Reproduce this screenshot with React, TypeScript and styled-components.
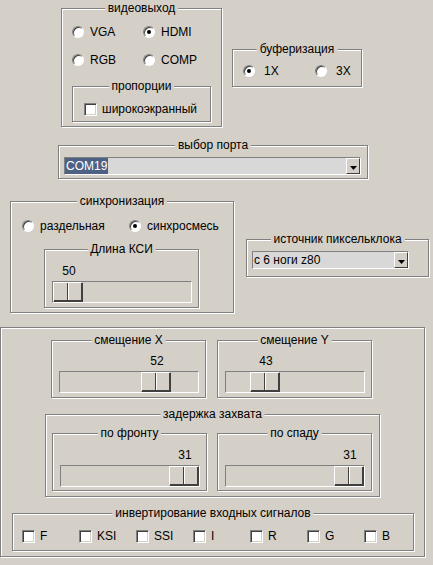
import React from 'react';
import styled, { createGlobalStyle } from 'styled-components';

const GlobalStyle = createGlobalStyle`
  html, body {
    margin: 0;
    padding: 0;
    background: #d4d0c8;
  }
  body {
    font-family: "Liberation Sans", Arial, sans-serif;
    font-size: 12px;
    color: #000;
  }
`;

const Page = styled.div`
  width: 433px;
  height: 565px;
  background: #d4d0c8;
  overflow: hidden;
  display: flex;
  flex-direction: column;
  align-items: flex-start;
`;

const Row = styled.div<{ $mt?: number; $ml?: number; $gap?: number }>`
  display: flex;
  align-items: flex-start;
  margin-top: ${(p) => p.$mt ?? 0}px;
  margin-left: ${(p) => p.$ml ?? 0}px;
  gap: ${(p) => p.$gap ?? 0}px;
`;

// etched border box, like a swing TitledBorder
const Group = styled.div<{
  $w: number;
  $h: number;
  $pt?: number;
  $pl?: number;
  $mt?: number;
  $ml?: number;
}>`
  position: relative;
  box-sizing: border-box;
  flex-shrink: 0;
  width: ${(p) => p.$w}px;
  height: ${(p) => p.$h}px;
  margin-top: ${(p) => p.$mt ?? 0}px;
  margin-left: ${(p) => p.$ml ?? 0}px;
  padding: ${(p) => p.$pt ?? 0}px 0 0 ${(p) => p.$pl ?? 0}px;
  border: 1px solid #808080;
  box-shadow: inset 1px 1px 0 #fff, 1px 1px 0 #fff;
`;

const Title = styled.span`
  position: absolute;
  top: -8px;
  left: 50%;
  transform: translateX(-50%);
  padding: 0 3px;
  background: #d4d0c8;
  line-height: 14px;
  white-space: nowrap;
`;

const RadioGrid = styled.div<{ $col: number; $rowGap?: number }>`
  display: grid;
  grid-template-columns: repeat(2, ${(p) => p.$col}px);
  row-gap: ${(p) => p.$rowGap ?? 0}px;
`;

const Option = styled.label<{ $gap?: number }>`
  display: flex;
  align-items: center;
  gap: ${(p) => p.$gap ?? 6}px;
  height: 14px;
  line-height: 14px;
  white-space: nowrap;
`;

const RadioMark = styled.span<{ $checked?: boolean }>`
  position: relative;
  flex-shrink: 0;
  box-sizing: border-box;
  width: 12px;
  height: 12px;
  border-radius: 50%;
  background: #fff;
  border: 1px solid;
  border-color: #808080 #fff #fff #808080;
  box-shadow: inset 1px 1px 0 #404040;

  &::after {
    content: '';
    display: ${(p) => (p.$checked ? 'block' : 'none')};
    position: absolute;
    left: 3px;
    top: 3px;
    width: 4px;
    height: 4px;
    border-radius: 50%;
    background: #000;
  }
`;

const CheckMark = styled.span`
  flex-shrink: 0;
  box-sizing: border-box;
  width: 13px;
  height: 13px;
  background: #fff;
  border: 1px solid;
  border-color: #808080 #fff #fff #808080;
  box-shadow: inset 1px 1px 0 #404040, inset -1px -1px 0 #d4d0c8;
`;

const CheckRow = styled.div`
  display: grid;
  grid-template-columns: repeat(7, 57px);
`;

const Combo = styled.div<{ $w: number }>`
  box-sizing: border-box;
  width: ${(p) => p.$w}px;
  height: 18px;
  display: flex;
  align-items: center;
  background: #d8d8d8;
  border: 1px solid;
  border-color: #808080 #fff #fff #808080;
`;

const ComboText = styled.span<{ $selected?: boolean }>`
  height: 16px;
  line-height: 16px;
  padding: 0 1px;
  background: ${(p) => (p.$selected ? '#4d6185' : 'transparent')};
  color: ${(p) => (p.$selected ? '#fff' : '#000')};
`;

const ComboArrow = styled.span`
  margin-left: auto;
  box-sizing: border-box;
  width: 14px;
  height: 16px;
  display: flex;
  align-items: flex-end;
  justify-content: center;
  padding-bottom: 3px;
  background: #d4d0c8;
  border: 1px solid;
  border-color: #fff #404040 #404040 #fff;
`;

const SliderValue = styled.div`
  height: 14px;
  line-height: 14px;
`;

const ValueText = styled.span`
  display: inline-block;
  width: 30px;
  text-align: center;
`;

const Track = styled.div`
  box-sizing: border-box;
  display: flex;
  width: 140px;
  height: 22px;
  margin-top: 3px;
  border: 1px solid;
  border-color: #808080 #fff #fff #808080;
`;

const Thumb = styled.div`
  position: relative;
  box-sizing: border-box;
  width: 30px;
  height: 20px;
  background: #d4d0c8;
  border-left: 1px solid #fff;
  border-top: 1px solid #fff;
  border-right: 1px solid #404040;
  border-bottom: 1px solid #404040;
  box-shadow: inset -1px -1px 0 #404040;

  &::after {
    content: '';
    position: absolute;
    left: 13px;
    top: 0;
    bottom: 1px;
    width: 1px;
    background: #404040;
    box-shadow: 1px 0 0 #fff;
  }
`;

const Radio = ({ label, checked, gap }: { label: string; checked?: boolean; gap?: number }) => (
  <Option $gap={gap}>
    <RadioMark $checked={checked} />
    {label}
  </Option>
);

const Check = ({ label }: { label: string }) => (
  <Option $gap={5}>
    <CheckMark />
    {label}
  </Option>
);

const Arrow = () => (
  <svg width="7" height="4" viewBox="0 0 7 4">
    <polygon points="0,0 7,0 3.5,4" fill="#000" />
  </svg>
);

interface SliderProps {
  value: number;
  min: number;
  max: number;
}

const Slider = ({ value, min, max }: SliderProps) => {
  const pos = Math.round(((value - min) / (max - min)) * 108);
  return (
    <>
      <SliderValue>
        <ValueText style={{ marginLeft: pos + 2 }}>{value}</ValueText>
      </SliderValue>
      <Track>
        <Thumb style={{ marginLeft: pos }} />
      </Track>
    </>
  );
};

const SliderGroup = ({ title, pt, ...rest }: SliderProps & { title: string; pt: number }) => (
  <Group $w={155} $h={58} $pt={pt} $pl={7}>
    <Title>{title}</Title>
    <Slider {...rest} />
  </Group>
);

export default function App() {
  return (
    <>
      <GlobalStyle />
      <Page>
        <Row $mt={8} $ml={61} $gap={10}>
          <Group $w={161} $h={119} $pt={16} $pl={10}>
            <Title>видеовыход</Title>
            <RadioGrid $col={71} $rowGap={14}>
              <Radio label="VGA" />
              <Radio label="HDMI" checked />
              <Radio label="RGB" />
              <Radio label="COMP" />
            </RadioGrid>
            <Group $w={139} $h={36} $mt={19} $pt={15} $pl={11}>
              <Title>пропорции</Title>
              <Check label="широкоэкранный" />
            </Group>
          </Group>
          <Group $w={130} $h={38} $mt={41} $pt={14} $pl={10}>
            <Title>буферизация</Title>
            <RadioGrid $col={72}>
              <Radio label="1X" checked gap={9} />
              <Radio label="3X" gap={9} />
            </RadioGrid>
          </Group>
        </Row>

        <Group $w={310} $h={34} $mt={18} $ml={58} $pt={11} $pl={5}>
          <Title>выбор порта</Title>
          <Combo $w={297}>
            <ComboText $selected>COM19</ComboText>
            <ComboArrow>
              <Arrow />
            </ComboArrow>
          </Combo>
        </Group>

        <Row $mt={22} $ml={10} $gap={12}>
          <Group $w={224} $h={112} $pt={17} $pl={11}>
            <Title>синхронизация</Title>
            <RadioGrid $col={107}>
              <Radio label="раздельная" />
              <Radio label="синхросмесь" checked />
            </RadioGrid>
            <Group $w={155} $h={59} $mt={16} $ml={22} $pt={14} $pl={7}>
              <Title>Длина КСИ</Title>
              <Slider value={50} min={50} max={100} />
            </Group>
          </Group>
          <Group $w={183} $h={38} $mt={38} $pt={11} $pl={5}>
            <Title>источник пиксельклока</Title>
            <Combo $w={157}>
              <ComboText>с 6 ноги z80</ComboText>
              <ComboArrow>
                <Arrow />
              </ComboArrow>
            </Combo>
          </Group>
        </Row>

        <Group $w={425} $h={230} $mt={14}>
          <Row $mt={12} $ml={50} $gap={11}>
            <SliderGroup title="смещение X" pt={13} value={52} min={25} max={61} />
            <SliderGroup title="смещение Y" pt={13} value={43} min={35} max={71} />
          </Row>
          <Group $w={335} $h={83} $mt={16} $ml={44} $pt={18} $pl={6}>
            <Title>задержка захвата</Title>
            <Row $gap={10}>
              <SliderGroup title="по фронту" pt={14} value={31} min={0} max={31} />
              <SliderGroup title="по спаду" pt={14} value={31} min={0} max={31} />
            </Row>
          </Group>
          <Group $w={402} $h={38} $mt={16} $ml={11} $pt={15} $pl={9}>
            <Title>инвертирование входных сигналов</Title>
            <CheckRow>
              {['F', 'KSI', 'SSI', 'I', 'R', 'G', 'B'].map((s) => (
                <Check key={s} label={s} />
              ))}
            </CheckRow>
          </Group>
        </Group>
      </Page>
    </>
  );
}
